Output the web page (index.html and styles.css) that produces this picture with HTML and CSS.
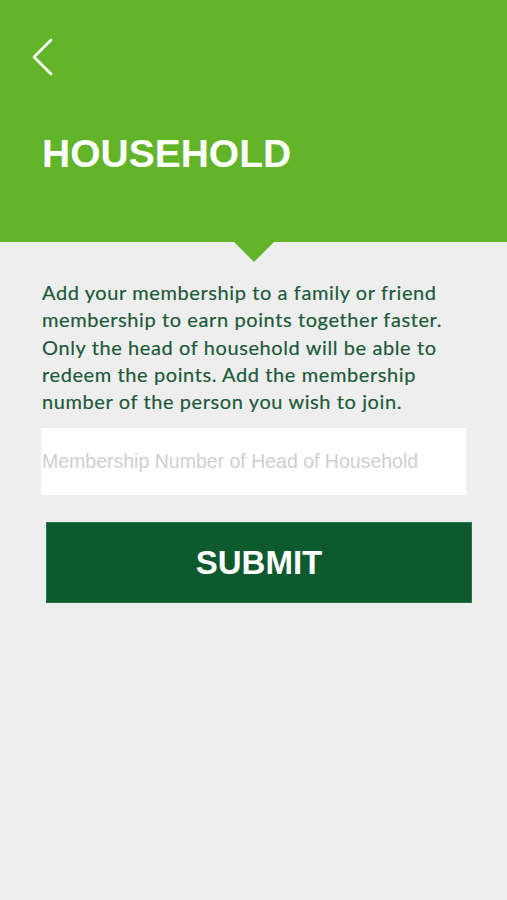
FILE: index.html
```html
<!DOCTYPE html>
<html lang="en">
<head>
<meta charset="UTF-8" />
<meta name="viewport" content="width=device-width, initial-scale=1.0" />
<title>Household</title>
<link rel="stylesheet" href="styles.css">
</head>
<body>

<header class="top">
  <button class="back" aria-label="Back">
    <svg width="24" height="40" viewBox="0 0 24 40">
      <polyline points="20,3 3,20 20,37" fill="none" stroke="#fff" stroke-width="2.6" stroke-linecap="round" stroke-linejoin="round" />
    </svg>
  </button>
  <h1>HOUSEHOLD</h1>
</header>

<main class="content">
  <p class="intro">Add your membership to a family or friend membership to earn points together faster. Only the head of household will be able to redeem the points. Add the membership number of the person you wish to join.</p>
  <input class="member-input" type="text" placeholder="Membership Number of Head of Household" />
  <button class="submit">SUBMIT</button>
</main>

</body>
</html>
```

FILE: styles.css
```css
:root {
  --green: #62b428;
  --dark-green: #0e5a2f;
  --text-green: #1c5a39;
  --background: #eeeeee;
}

body {
  margin: 0;
  background-color: var(--background);
  font-family: Lato, "Noto Sans", sans-serif;
}

.top {
  position: relative;
  height: 242px;
  background-color: var(--green);
  box-sizing: border-box;
  padding: 37px 0 0 31px;
}

/* little arrow under the header */
.top::after {
  content: '';
  position: absolute;
  left: 234px;
  bottom: -20px;
  border-left: 20px solid transparent;
  border-right: 20px solid transparent;
  border-top: 20px solid var(--green);
}

.back {
  display: block;
  background: none;
  border: none;
  padding: 0;
  cursor: pointer;
}

.back svg {
  display: block;
}

.top h1 {
  margin: 54px 0 0 11px;
  color: #fff;
  font-family: "Liberation Sans", Arial, sans-serif;
  font-weight: bold;
  font-size: 39px;
  line-height: 46px;
}

.content {
  padding: 0 41px;
}

.intro {
  margin: 37px 0 0 1px;
  color: var(--text-green);
  font-size: 20px;
  letter-spacing: 0.6px;
  line-height: 27.3px;
  -webkit-text-stroke: 0.2px var(--text-green);
}

.member-input {
  display: block;
  box-sizing: border-box;
  width: 425px;
  height: 67px;
  margin-top: 13px;
  padding: 0 0 0 1px;
  border: none;
  outline: none;
  background-color: #fff;
  font-family: "Liberation Sans", Arial, sans-serif;
  font-size: 19.5px;
  color: #333;
}

.member-input::placeholder {
  color: #cfcfcf;
}

.submit {
  display: block;
  width: 426px;
  height: 81px;
  margin: 27px 0 0 5px;
  border: 1px solid #2a7246;
  background-color: var(--dark-green);
  color: #fff;
  font-family: "Liberation Sans", Arial, sans-serif;
  font-weight: bold;
  font-size: 33px;
  cursor: pointer;
}
```
